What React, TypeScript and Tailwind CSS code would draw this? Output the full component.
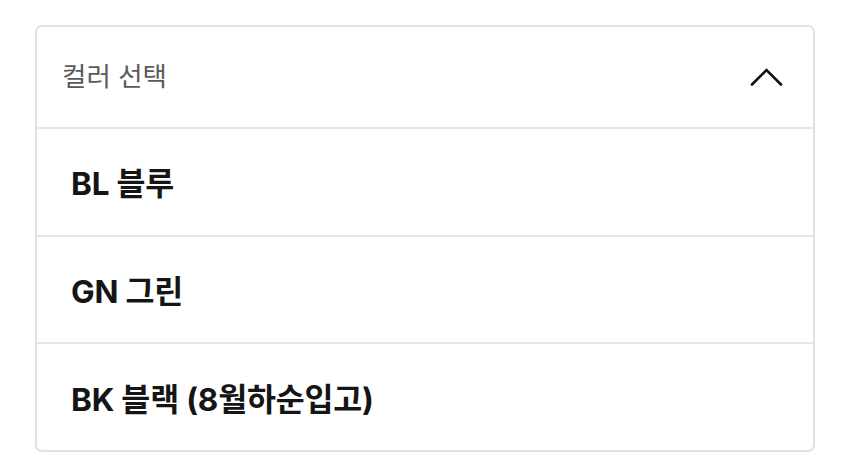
import React from 'react';

const colors = ['BL 블루', 'GN 그린', 'BK 블랙 (8월하순입고)'];

const ColorSelect: React.FC = () => {
  return (
    <div className="w-[780px] h-[427px] rounded-[7px] border-2 border-[#e2e2e2] bg-white flex flex-col overflow-hidden">
      {/* Header: label + chevron */}
      <div className="h-[102px] shrink-0 flex items-center justify-between pl-[25px] pr-[30px] border-b-2 border-[#e6e6e6]">
        <span className="text-[26.5px] text-[#5a5a5a]">컬러 선택</span>
        <svg width="33" height="18" viewBox="0 0 33 18" fill="none">
          <path d="M2 16.5 L16.5 2 L31 16.5" stroke="#111" strokeWidth="2.6" strokeLinecap="round" strokeLinejoin="miter" />
        </svg>
      </div>

      {/* Options */}
      {colors.map((c, i) => (
        <div
          key={c}
          className={`flex-1 flex items-center pl-[34px] pt-[4px] ${i < colors.length - 1 ? 'border-b-2 border-[#e6e6e6]' : ''}`}
        >
          <span className="text-[31.5px] font-bold text-[#151515] tracking-[-0.2px]">{c}</span>
        </div>
      ))}
    </div>
  );
};

export default function App() {
  return (
    <div
      className="w-[850px] h-[470px] bg-white pt-[25px] pl-[35px]"
      style={{ fontFamily: 'Inter, "Noto Sans CJK KR", sans-serif' }}
    >
      <ColorSelect />
    </div>
  );
}
